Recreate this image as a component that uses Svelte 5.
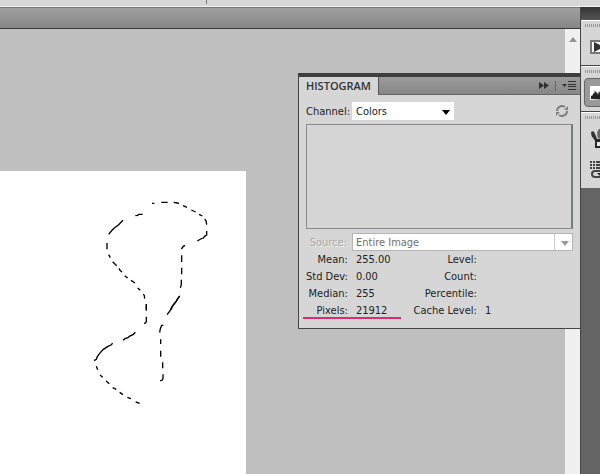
<script>
  let channel = $state("Colors");

  const stats = [
    ["Mean:", "255.00", "Level:", ""],
    ["Std Dev:", "0.00", "Count:", ""],
    ["Median:", "255", "Percentile:", ""],
    ["Pixels:", "21912", "Cache Level:", "1"],
  ];
</script>

<div class="app">
  <header class="options"><span class="divider"></span></header>

  <div class="workspace">
    <main class="document">
      <div class="tabs"></div>
      <div class="view">
        <div class="canvas">
          <svg class="selection" viewBox="0 0 738 909" aria-label="Selection">
            <g transform="translate(240 57)">
              <path d="M216 40h7M244 37h19M281 37l12 2 4 2M309 47l12 5M334 60l13 6M357 73l10 5M374 87l4 5 2 12M380 123v12l-6 4-4 5-8 3-10 6M315 166l-5 3-6 8M305 196v20M305 233v20M304 269v15l-3 9M299 318l-6 9-4 7-10 12-6 13M166 77l7-1 3-3h12M129 91l-6 6-7 7-14 11-8 8-8 10M81 159v19M86 194l5 9M98 215l12 12M117 235l3 6 6 5M134 257l9 7M153 271l12 8M173 294l8 7M190 312l3 5 1 9M199 342v18" />
            </g>
            <g transform="translate(240 357)">
              <path d="M199 43v19M199 80v14l-2 5-5 1M299 18l-7 9-5 9-12 15-4 10-10 13M250 106h-5l-4 10-2 12M242 148v14M242 182v18M248 217v18M249 253v12l-3 6-6 1M166 127l-6 6-12 6-4 4-9 3-6 5M98 160l-5 5-9 4-14 9-11 12-7 10-3 8-7 4M49 229l4 10M60 255l8 7M78 273l10 8M98 293l11 5M119 307l10 7M142 322l11 4M167 336l12 4" />
            </g>
          </svg>
        </div>
        <div class="scrollbar">
          <svg viewBox="0 0 8 5" width="8" height="5"><path d="M0 5L4 0l4 5z" fill="#959595" /></svg>
        </div>
      </div>
    </main>

    <aside class="dock">
      <div class="dock-head"></div>
      <div class="group">
        <button aria-label="Actions">
          <svg viewBox="0 0 16 14" width="16" height="14">
            <rect x="1" y="1" width="16" height="12" fill="#fafafa" stroke="#777" stroke-width="2" />
            <path d="M4 2l10 5-10 5z" fill="#333" />
          </svg>
        </button>
      </div>
      <div class="group">
        <button class="active" aria-label="Histogram">
          <svg viewBox="0 0 16 14" width="16" height="14">
            <path d="M0 0h16v14H0z" fill="#fff" />
            <path d="M1 13v-3l2-1V7l1 1 1-4 1 3 1-1 1 3 1-4 1 2 1-5 1 3 4 2v7z" fill="#222" />
          </svg>
        </button>
      </div>
      <div class="group tall">
        <button aria-label="Brushes">
          <svg viewBox="0 0 16 20" width="16" height="20">
            <path d="M1 3q3-2 4 2l3 7-2 1-3-4Q1 7 1 3z" fill="#333" />
            <path d="M9 0q-3 3-1 9l2 1q2-5 0-10z" fill="#666" />
            <path d="M5 10h11v9H5z" fill="#292929" /><path d="M7 13h9v4H7z" fill="#eee" />
          </svg>
        </button>
        <button aria-label="Clone Source">
          <svg viewBox="0 0 16 18" width="16" height="18">
            <path d="M0 1h2m1 0h2m1 0h5M0 4h2m1 0h2m1 0h5M0 7h2m1 0h2m1 0h5" stroke="#444" stroke-width="2" />
            <path d="M12 10H5q-3 0-3 3t3 3h11" fill="none" stroke="#444" stroke-width="2" />
            <path d="M7 12h9l-4 5z" fill="#222" />
          </svg>
        </button>
      </div>
    </aside>

    <section class="panel">
      <div class="panel-head">
        <h2>HISTOGRAM</h2>
        <div class="tools">
          <button aria-label="Collapse">
            <svg viewBox="0 0 10 7" width="10" height="7"><path d="M0 0l5 3.500L0 7zM5 0l5 3.500L5 7z" fill="#303030" /></svg>
          </button>
          <span class="sep"></span>
          <button aria-label="Panel menu">
            <svg viewBox="0 0 14 9" width="14" height="9">
              <path d="M0 3h5L2.500 6z" fill="#303030" />
              <path d="M6 .5h8M6 3.500h8M6 5.500h8M6 8.500h8" stroke="#333" />
            </svg>
          </button>
        </div>
      </div>

      <div class="body">
        <div class="row">
          <label for="channel">Channel:</label>
          <div class="pick channel">
            <select id="channel" bind:value={channel}>
              <option>Colors</option>
              <option>RGB</option>
              <option>Luminosity</option>
            </select>
            <svg class="arrow" viewBox="0 0 8 5" width="8" height="5"><path d="M0 0h8L4 5z" fill="#000" /></svg>
          </div>
          <button class="refresh" aria-label="Refresh">
            <svg viewBox="0 0 12 12" width="12" height="12">
              <path d="M1 6a5 5 0 0 1 8-4M11 6a5 5 0 0 1-8 4" fill="none" stroke="#808080" stroke-width="2" />
              <path d="M12 1v4H8zM0 11V7h4z" fill="#808080" />
            </svg>
          </button>
        </div>

        <div class="graph"></div>

        <div class="row">
          <label for="source" class="off">Source:</label>
          <div class="pick source">
            <select id="source" disabled>
              <option>Entire Image</option>
            </select>
            <svg class="arrow" viewBox="0 0 8 5" width="8" height="5"><path d="M0 0h8L4 5z" fill="#999" /></svg>
          </div>
        </div>

        <table>
          <tbody>
            {#each stats as [name, value, name2, value2]}
              <tr>
                <th scope="row">{name}</th>
                <td>{value}</td>
                <th scope="row">{name2}</th>
                <td>{value2}</td>
              </tr>
            {/each}
          </tbody>
        </table>
        <div class="underline"></div>
      </div>
    </section>
  </div>
</div>

<style>
  :global(body) {
    margin: 0;
  }

  .app {
    min-height: 100vh;
    display: flex;
    flex-direction: column;
    background: #bfbfbf;
    font-family: "DejaVu Sans Condensed", "DejaVu Sans", sans-serif;
    font-stretch: condensed;
    font-size: 11px;
    color: #222;
  }

  button {
    border: 0;
    padding: 0;
    background: none;
    display: flex;
  }

  button svg {
    flex-shrink: 0;
  }

  .options {
    height: 6px;
    background: #d7d7d7;
    border-bottom: 1px solid #f4f4f4;
  }

  .divider {
    display: block;
    width: 1px;
    height: 4px;
    margin-left: 206px;
    background: #777;
  }

  .workspace {
    flex: 1;
    display: flex;
    position: relative;
  }

  .document {
    flex: 1;
    display: flex;
    flex-direction: column;
  }

  .tabs {
    height: 20px;
    background: linear-gradient(#a0a0a0, #868686);
    border-top: 1px solid #777;
    border-bottom: 1px solid #383838;
  }

  .view {
    flex: 1;
    display: flex;
    justify-content: space-between;
  }

  .canvas {
    width: 246px;
    margin-top: 142px;
    background: #fff;
  }

  .selection {
    display: block;
    width: 100%;
    fill: none;
    stroke: #000;
    stroke-width: 4;
  }

  .scrollbar {
    width: 15px;
    padding-top: 7px;
    background: #f0f0f0;
    text-align: center;
    line-height: 5px;
  }

  .dock {
    width: 19px;
    background: #646464;
    border-left: 1px solid #444;
    overflow: hidden;
  }

  .dock-head {
    height: 13px;
    background: linear-gradient(#333, #555);
  }

  .group {
    box-sizing: border-box;
    height: 46px;
    padding: 19px 0 0 9px;
    background: #d6d6d6;
    border-top: 1px solid #fff;
    border-bottom: 1px solid #444;
    position: relative;
  }

  .group::before {
    content: "";
    position: absolute;
    left: 4px;
    right: 0;
    top: 3px;
    height: 3px;
    background: repeating-linear-gradient(90deg, #999 0 1px, transparent 1px 2px);
    border-image: none;
  }

  .group + .group {
    padding: 11px 0 0 3px;
  }

  .group .active {
    box-sizing: border-box;
    width: 30px;
    height: 29px;
    padding: 7px 5px;
    border: 1px solid #666;
    border-radius: 4px;
    background: #999;
  }

  .group.tall {
    height: 76px;
    padding: 16px 0 0 9px;
    display: flex;
    flex-direction: column;
    gap: 12px;
    border-bottom: 0;
  }

  .panel {
    position: absolute;
    top: 66px;
    right: 19px;
    width: 281px;
    background: #d6d6d6;
    border: 1px solid #444;
    border-top: 4px solid #3e3e3e;
  }

  .panel-head {
    display: flex;
    justify-content: space-between;
    height: 18px;
    background: linear-gradient(#9b9b9b, #858585);
  }

  h2 {
    margin: 0;
    padding: 0 7px;
    background: #d6d6d6;
    border-right: 1px solid #555;
    font: 600 11px/18px "Open Sans", sans-serif;
    color: #333;
  }

  .tools {
    display: flex;
    align-items: center;
    gap: 6px;
    padding-right: 4px;
    border-bottom: 1px solid #666;
    flex: 1;
    justify-content: flex-end;
  }

  .sep {
    width: 1px;
    height: 10px;
    background: #666;
  }

  .body {
    padding: 7px 7px 9px;
  }

  .row {
    display: flex;
    align-items: center;
  }

  label {
    width: 41px;
    margin-right: 5px;
    text-align: right;
    white-space: nowrap;
  }

  .off {
    color: #aaa;
    text-shadow: 1px 1px #eee;
  }

  .pick {
    position: relative;
  }

  select {
    appearance: none;
    box-sizing: border-box;
    display: block;
    width: 100%;
    height: 18px;
    margin: 0;
    padding: 0 4px;
    border: 0;
    border-radius: 0;
    background: #fff;
    font: inherit;
    color: #222;
  }

  .channel {
    width: 102px;
  }

  .source {
    flex: 1;
  }

  .source select {
    border: 1px solid #b5b5b5;
    padding: 0 3px;
    color: #707070;
    opacity: 1;
    background: linear-gradient(#ccc, #ccc) right 17px top / 1px 100% no-repeat #fff;
  }

  .arrow {
    position: absolute;
    right: 4px;
    top: 8px;
    pointer-events: none;
  }

  .refresh {
    margin-left: auto;
    margin-right: 5px;
  }

  .graph {
    height: 103px;
    margin: 4px 0;
    border: 1px solid #8b8b8b;
    border-right: 2px solid #718078;
  }

  table {
    border-collapse: collapse;
    table-layout: fixed;
  }

  th,
  td {
    height: 17px;
    padding: 0;
    line-height: 17px;
    font-weight: 400;
    text-align: right;
    white-space: nowrap;
  }

  th:first-child {
    width: 41px;
  }

  td {
    width: 44px;
    padding-left: 8px;
    text-align: left;
  }

  th:nth-child(3) {
    width: 77px;
  }

  .underline {
    width: 98px;
    height: 2px;
    margin: -2px 0 0 -3px;
    background: #d92d70;
  }
</style>
